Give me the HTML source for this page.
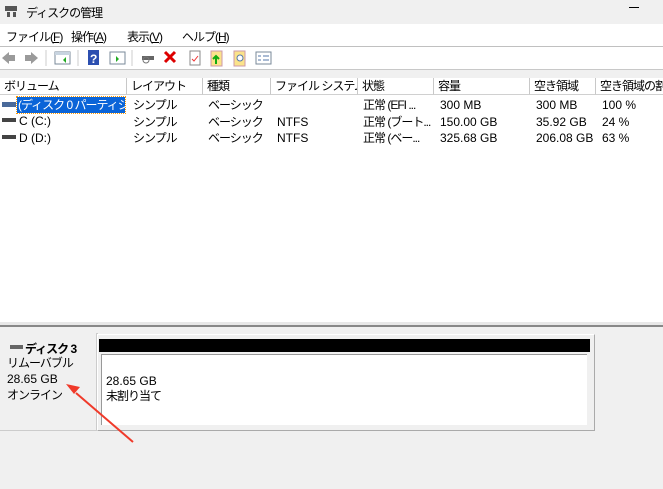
<html><head><style>
body{margin:0;width:663px;height:489px;overflow:hidden;background:#f0f0f0;font-family:"Liberation Sans","Noto Sans CJK JP",sans-serif;font-size:12px;color:#000;position:relative}
.a{position:absolute;white-space:nowrap}
.j{letter-spacing:-1px}
.hd{position:absolute;top:78px;height:17px;border-right:1px solid #c8c8c8;border-bottom:1px solid #d0d0d0;background:#fff;line-height:17px;padding-left:4px;box-sizing:border-box;white-space:nowrap;overflow:hidden;letter-spacing:-1px}
.r{position:absolute;line-height:16.5px;white-space:nowrap;overflow:hidden}
</style></head><body>
<div class="a" style="left:0;top:0;width:663px;height:24px;background:#f0f0f0"></div>
<svg class="a" style="left:4px;top:4px" width="14" height="14"><rect x="1" y="2" width="12" height="5" fill="#555"/><rect x="3" y="8" width="3" height="5" fill="#555"/><rect x="9" y="8" width="3" height="5" fill="#555"/></svg>
<div class="a j" style="left:26px;top:4px;font-size:12px">ディスクの管理</div>
<div class="a" style="left:629px;top:7px;width:10px;height:1px;background:#000"></div>
<div class="a" style="left:0;top:24px;width:663px;height:22px;background:#fff"></div>
<div class="a j" style="left:6px;top:28px">ファイル(<u>F</u>)</div>
<div class="a j" style="left:71px;top:28px">操作(<u>A</u>)</div>
<div class="a j" style="left:127px;top:28px">表示(<u>V</u>)</div>
<div class="a j" style="left:182px;top:28px">ヘルプ(<u>H</u>)</div>
<div class="a" style="left:0;top:46px;width:663px;height:1px;background:#c0c0c0"></div>
<div class="a" style="left:0;top:47px;width:663px;height:22px;background:#fff"></div>
<svg class="a" style="left:0;top:48px" width="280" height="20">
<path d="M2 10l7-6v3h6v6h-6v3z" fill="#9a9a9a"/><path d="M38 10l-7-6v3h-6v6h6v3z" fill="#9a9a9a"/>
<line x1="46" y1="2" x2="46" y2="18" stroke="#ccc"/>
<rect x="55" y="4" width="15" height="12" fill="#fff" stroke="#7a8a9a"/><rect x="55" y="4" width="15" height="3" fill="#c8d4e0"/><path d="M66 9l-3 3 3 3z" fill="#2a2"/>
<line x1="78" y1="2" x2="78" y2="18" stroke="#ccc"/>
<rect x="88" y="2" width="11" height="15" fill="#2c4fb0"/><text x="90" y="15" fill="#fff" font-size="12" font-weight="bold">?</text>
<rect x="110" y="4" width="15" height="12" fill="#fff" stroke="#7a8a9a"/><path d="M116 8l3 3-3 3z" fill="#2a2"/>
<line x1="132" y1="2" x2="132" y2="18" stroke="#ccc"/>
<rect x="142" y="8" width="12" height="4" fill="#666"/><circle cx="146" cy="12" r="3" fill="none" stroke="#777"/>
<path d="M165 4l10 10M175 4l-10 10" stroke="#d00" stroke-width="3"/>
<rect x="190" y="3" width="10" height="14" fill="#fff" stroke="#888"/><path d="M192 11l2 2 4-5" stroke="#e33" fill="none"/>
<rect x="211" y="3" width="11" height="15" fill="#fbe38a" stroke="#c9a"/><path d="M216 8v8M213 11l3-3 3 3" stroke="#1a1" stroke-width="2" fill="none"/>
<rect x="234" y="3" width="11" height="15" fill="#fbe38a" stroke="#c9a"/><circle cx="240" cy="10" r="3" fill="#fff" stroke="#57a"/>
<rect x="256" y="4" width="15" height="12" fill="#fff" stroke="#7a8a9a"/><path d="M258 8h3M258 12h3M263 8h6M263 12h6" stroke="#57a"/>
</svg>
<div class="a" style="left:0;top:69px;width:663px;height:1px;background:#c8c8c8"></div>
<div class="a" style="left:0;top:78px;width:663px;height:244px;background:#fff"></div>
<div class="hd" style="left:0;width:127px">ボリューム</div>
<div class="hd" style="left:127px;width:76px">レイアウト</div>
<div class="hd" style="left:203px;width:68px">種類</div>
<div class="hd" style="left:271px;width:87px">ファイル システム</div>
<div class="hd" style="left:358px;width:76px">状態</div>
<div class="hd" style="left:434px;width:96px">容量</div>
<div class="hd" style="left:530px;width:66px">空き領域</div>
<div class="hd" style="left:596px;width:80px">空き領域の割</div>
<div class="a" style="left:2px;top:102px;width:14px;height:5px;background:#4a6a9a"></div>
<div class="a" style="left:2px;top:118px;width:14px;height:4px;background:#444"></div>
<div class="a" style="left:2px;top:135px;width:14px;height:4px;background:#444"></div>
<div class="a j" style="left:17px;top:97px;width:107px;height:16px;line-height:16px;background:#0a64d8;color:#fff;outline:1px dotted #f90;overflow:hidden;padding-left:1px">(ディスク 0 パーティシ...</div>
<div class="r" style="left:19px;top:113px">C (C:)<br>D (D:)</div>
<div class="r j" style="left:133px;top:97px">シンプル<br>シンプル<br>シンプル</div>
<div class="r j" style="left:208px;top:97px">ベーシック<br>ベーシック<br>ベーシック</div>
<div class="r" style="left:277px;top:97px">&nbsp;<br>NTFS<br>NTFS</div>
<div class="r j" style="left:363px;top:97px;width:70px">正常 (EFI ...<br>正常 (ブート...<br>正常 (ベー...</div>
<div class="r" style="left:440px;top:97px">300 MB<br>150.00 GB<br>325.68 GB</div>
<div class="r" style="left:536px;top:97px">300 MB<br>35.92 GB<br>206.08 GB</div>
<div class="r" style="left:602px;top:97px">100 %<br>24 %<br>63 %</div>
<div class="a" style="left:0;top:322px;width:663px;height:3px;background:#e8e8e8"></div>
<div class="a" style="left:0;top:325px;width:663px;height:2px;background:#888"></div>
<div class="a" style="left:0;top:333px;width:96px;height:97px;border-right:2px solid #ccc;border-bottom:1px solid #ccc;background:#f0f0f0"></div>
<div class="a" style="left:10px;top:345px;width:13px;height:4px;background:#666"></div>
<div class="a j" style="left:25px;top:340px;font-weight:bold;font-size:12px">ディスク 3</div>
<div class="a" style="left:7px;top:355px;line-height:16px"><span class="j">リムーバブル</span><br>28.65 GB<br><span class="j">オンライン</span></div>
<div class="a" style="left:97px;top:334px;width:496px;height:95px;border:1px solid #aaa;border-top-color:#fff;border-left-color:#fff"></div>
<div class="a" style="left:99px;top:339px;width:491px;height:13px;background:#000"></div>
<div class="a" style="left:101px;top:354px;width:485px;height:70px;background:#fff;border-top:1px solid #999;border-left:1px solid #999"></div>
<div class="a" style="left:106px;top:374px;line-height:15px">28.65 GB<br><span class="j">未割り当て</span></div>
<svg class="a" style="left:0;top:0" width="663" height="489"><path d="M133 442L76 393" stroke="#f03a2a" stroke-width="2"/><path d="M66 384l14 3-6 7z" fill="#f03a2a"/></svg>
</body></html>
